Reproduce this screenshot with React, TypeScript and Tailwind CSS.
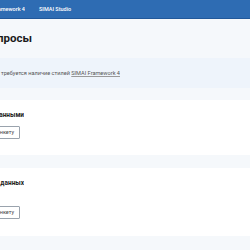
import React from "react"

function Clip({ width, children, className = "" }: { width: number; children: React.ReactNode; className?: string }) {
  return (
    <div className={`flex justify-end overflow-hidden whitespace-nowrap ${className}`} style={{ width }}>
      {children}
    </div>
  )
}

function Card({ title, gap, className }: { title: string; gap: string; className: string }) {
  return (
    <section className={`bg-white flex flex-col ${className}`}>
      <Clip width={24} className="h-[7px] items-center text-[6.5px] font-bold text-[#222] leading-none">
        <span>{title}</span>
      </Clip>
      <div className={gap} />
      <Clip width={20}>
        <button className="h-[13px] px-[5px] border border-[#9aa3ad] bg-white text-[5.5px] text-[#444] leading-none rounded-[1px]">
          Заполнить анкету
        </button>
      </Clip>
    </section>
  )
}

export default function App() {
  return (
    <div className="w-[250px] h-[250px] overflow-hidden bg-[#f5f8fb] font-['Roboto',sans-serif]">
      <nav className="h-[19px] bg-[#2e6cb3] border-b border-[#21589a] flex items-center gap-[14px] text-white text-[5.5px] font-medium">
        <Clip width={25}>
          <span>SIMAI Framework 4</span>
        </Clip>
        <span>SIMAI Studio</span>
      </nav>
      <div className="h-[39px] flex items-center">
        <Clip width={32} className="text-[11.5px] font-bold text-[#1a1a1a] leading-none">
          <h1>Запросы</h1>
        </Clip>
      </div>
      <div className="h-[30px] bg-[#eef4fb] flex items-center">
        <Clip width={120} className="text-[5.6px] text-[#555]">
          <span>
            Для работы требуется наличие стилей{" "}
            <span className="underline decoration-[#999] underline-offset-1">SIMAI Framework 4</span>
          </span>
        </Clip>
      </div>
      <div className="flex flex-col gap-[13px] pt-[12px]">
        <Card title="Анкета с данными" gap="h-[7px]" className="h-[55px] pt-[12px]" />
        <Card title="Анкета без данных" gap="h-[19px]" className="h-[68px] pt-[12px]" />
      </div>
    </div>
  )
}
